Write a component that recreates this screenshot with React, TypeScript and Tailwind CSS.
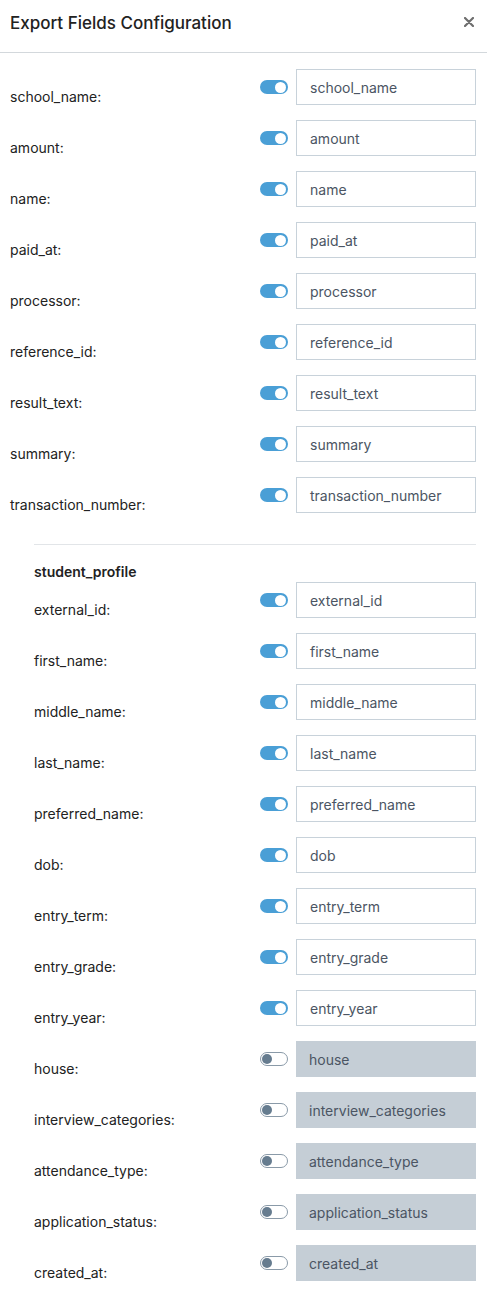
// Export fields configuration panel
const mainFields = [
  'school_name',
  'amount',
  'name',
  'paid_at',
  'processor',
  'reference_id',
  'result_text',
  'summary',
  'transaction_number',
];

const profileFields: { name: string; on: boolean }[] = [
  { name: 'external_id', on: true },
  { name: 'first_name', on: true },
  { name: 'middle_name', on: true },
  { name: 'last_name', on: true },
  { name: 'preferred_name', on: true },
  { name: 'dob', on: true },
  { name: 'entry_term', on: true },
  { name: 'entry_grade', on: true },
  { name: 'entry_year', on: true },
  { name: 'house', on: false },
  { name: 'interview_categories', on: false },
  { name: 'attendance_type', on: false },
  { name: 'application_status', on: false },
  { name: 'created_at', on: false },
];

function Toggle({ on }: { on: boolean }) {
  return on ? (
    <span className="flex h-[14px] w-[28px] items-center justify-end rounded-full bg-[#4a9fd6] px-[2px]">
      <span className="h-[11px] w-[11px] rounded-full bg-white" />
    </span>
  ) : (
    <span className="flex h-[14px] w-[28px] items-center rounded-full border border-[#8a9aa8] bg-white px-[1px]">
      <span className="h-[10px] w-[10px] rounded-full bg-[#667c8f]" />
    </span>
  );
}

function FieldRow({ name, on }: { name: string; on: boolean }) {
  return (
    <div className="flex h-[51px] items-start">
      <span className="flex-1 pt-[18px] text-[14px] leading-5 text-[#222]">{name}:</span>
      <div className="flex h-9 items-center">
        <Toggle on={on} />
      </div>
      <div
        className={`ml-2 flex h-9 w-[180px] items-center px-[13px] text-[14px] text-[#4b5563] ${
          on ? 'border border-[#c8d2da] bg-white' : 'bg-[#c5ced6]'
        }`}
      >
        {name}
      </div>
    </div>
  );
}

export default function App() {
  return (
    <div className="min-h-[1293px] w-[487px] bg-white font-['Inter',sans-serif]">
      <div className="flex h-[53px] items-start justify-between border-b border-[#d3d8dc] pl-[10px] pr-[13px] pt-[11px]">
        <h1 className="text-[17px] font-medium leading-6 text-[#222]">Export Fields Configuration</h1>
        <svg width="10" height="10" viewBox="0 0 10 10" className="mt-[6px]">
          <path d="M1 1 L9 9 M9 1 L1 9" stroke="#6e6e6e" strokeWidth="2.2" strokeLinecap="round" />
        </svg>
      </div>

      <div className="pl-[10px] pr-[11px] pt-4">
        {mainFields.map((f) => (
          <FieldRow key={f} name={f} on />
        ))}

        <div className="ml-6 mt-4 border-t border-[#e2e5e8] pt-[17px]">
          <p className="text-[14px] font-semibold leading-5 text-[#222]">student_profile</p>
          <div className="-ml-6 pl-6">
            {profileFields.map((f) => (
              <FieldRow key={f.name} name={f.name} on={f.on} />
            ))}
          </div>
        </div>
      </div>
    </div>
  );
}
